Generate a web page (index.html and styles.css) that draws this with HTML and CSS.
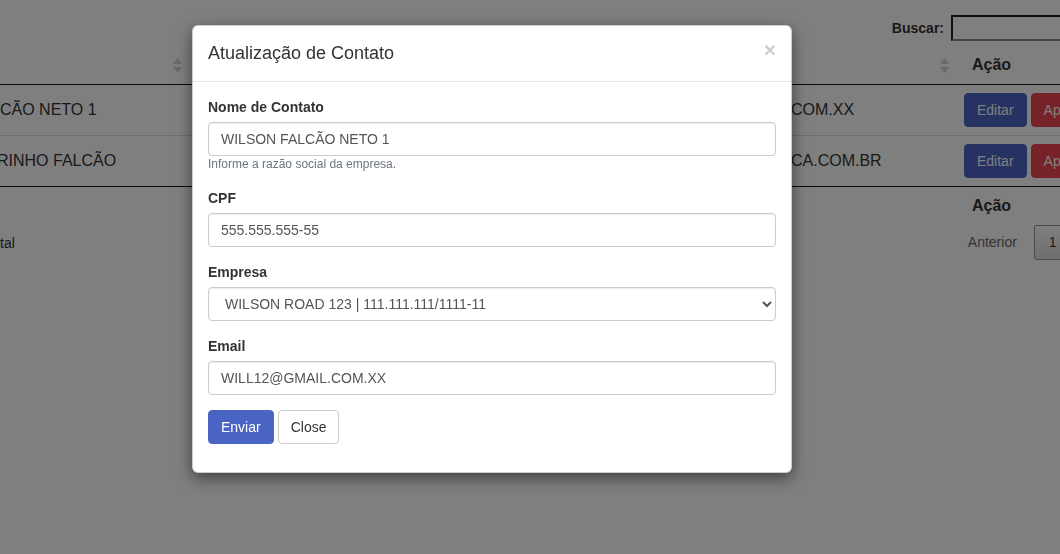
FILE: index.html
```html
<!DOCTYPE html>
<html lang="pt-BR">
<head>
<meta charset="utf-8">
<title>Contatos</title>
<link rel="stylesheet" href="styles.css">
</head>
<body>
<div class="page">
  <div class="filter">
    <label class="filter-label">Buscar:<input class="filter-input" type="search"></label>
  </div>
  <table class="data">
    <colgroup>
      <col class="c1"><col class="c2"><col class="c3"><col class="c4">
    </colgroup>
    <thead>
      <tr>
        <th class="sorting"><div class="th-in"><span></span><svg class="sort-icon" width="9" height="15" viewBox="0 0 9 15"><polygon points="4.5,0 9,6 0,6" /><polygon points="0,9 9,9 4.5,15" /></svg></div></th>
        <th class="sorting"></th>
        <th class="sorting"><div class="th-in"><span></span><svg class="sort-icon" width="9" height="15" viewBox="0 0 9 15"><polygon points="4.5,0 9,6 0,6" /><polygon points="0,9 9,9 4.5,15" /></svg></div></th>
        <th class="act-head">Ação</th>
      </tr>
    </thead>
    <tbody>
      <tr>
        <td class="first">CÃO NETO 1</td>
        <td></td>
        <td>COM.XX</td>
        <td class="actions"><button class="btn btn-blue">Editar</button><button class="btn btn-red">Apagar</button></td>
      </tr>
      <tr>
        <td class="first shifted">RINHO FALCÃO</td>
        <td></td>
        <td>CA.COM.BR</td>
        <td class="actions"><button class="btn btn-blue">Editar</button><button class="btn btn-red">Apagar</button></td>
      </tr>
    </tbody>
    <tfoot>
      <tr>
        <th></th>
        <th></th>
        <th></th>
        <th class="act-head">Ação</th>
      </tr>
    </tfoot>
  </table>
  <div class="bottom">
    <div class="info">tal</div>
    <div class="paging">
      <a class="pbtn disabled">Anterior</a>
      <a class="pbtn current">1</a>
      <a class="pbtn disabled">Próximo</a>
    </div>
  </div>
</div>

<div class="backdrop"></div>

<div class="modal">
  <div class="modal-header">
    <h4 class="modal-title">Atualização de Contato</h4>
    <button class="close" type="button">×</button>
  </div>
  <div class="modal-body">
    <div class="form-group">
      <label class="lbl">Nome de Contato</label>
      <input class="form-control" type="text" value="WILSON FALCÃO NETO 1">
      <small class="help">Informe a razão social da empresa.</small>
    </div>
    <div class="form-group">
      <label class="lbl">CPF</label>
      <input class="form-control" type="text" value="555.555.555-55">
    </div>
    <div class="form-group">
      <label class="lbl">Empresa</label>
      <select class="form-control">
        <option>WILSON ROAD 123 | 111.111.111/1111-11</option>
      </select>
    </div>
    <div class="form-group">
      <label class="lbl">Email</label>
      <input class="form-control" type="text" value="WILL12@GMAIL.COM.XX">
    </div>
    <div class="buttons">
      <button class="btn btn-blue" type="button">Enviar</button>
      <button class="btn btn-default" type="button">Close</button>
    </div>
  </div>
</div>
</body>
</html>
```
FILE: styles.css
```css
* { box-sizing: border-box; }

html, body {
  margin: 0;
  padding: 0;
  overflow: hidden;
  width: 1060px;
  height: 554px;
}

body {
  font-family: "Liberation Sans", Arial, sans-serif;
  font-size: 14px;
  color: #333;
  background: #fff;
}

.page {
  width: 1155px;
  padding-top: 15px;
}

/* search */
.filter {
  display: flex;
  justify-content: flex-end;
  align-items: center;
  height: 26px;
  margin-bottom: 5px;
}
.filter-label {
  display: flex;
  align-items: center;
  font-weight: bold;
  font-size: 14px;
  color: #333;
}
.filter-input {
  margin-left: 7px;
  width: 204px;
  height: 26px;
  border-style: solid;
  border-width: 2px;
  border-color: #222 #888 #888 #222;
  background: #fff;
  font: 14px "Liberation Sans", Arial, sans-serif;
}

/* table */
.data {
  width: 1155px;
  table-layout: fixed;
  border-collapse: separate;
  border-spacing: 0;
  font-size: 16px;
  color: #333;
}
.c1 { width: 187px; }
.c2 { width: 594px; }
.c3 { width: 173px; }
.c4 { width: 201px; }

.data thead th {
  padding: 10px 5px 10px 18px;
  line-height: 18px;
  height: 38px;
  border-bottom: 1px solid #111;
  font-weight: bold;
  text-align: left;
}
.data thead th.act-head { padding-left: 18px; }
.th-in {
  display: flex;
  justify-content: space-between;
  align-items: center;
}
.sort-icon { fill: #d2d2d2; display: block; }

.data tbody td {
  box-sizing: content-box;
  padding: 8px 10px;
  height: 34px;
  line-height: 20px;
  vertical-align: middle;
  white-space: nowrap;
  overflow: hidden;
}
.data tbody tr + tr td { border-top: 1px solid #ddd; }
.data tbody td.first { padding-left: 0; }
.data tbody td.shifted { text-indent: -3px; }
.data tbody td.actions { overflow: visible; }
.actions { display: flex; }
.actions .btn + .btn { margin-left: 4px; }

.data tfoot th {
  padding: 10px 18px 6px 18px;
  line-height: 18px;
  border-top: 1px solid #111;
  text-align: left;
  font-weight: bold;
}

/* info + paging */
.bottom {
  display: flex;
  justify-content: space-between;
  align-items: flex-start;
}
.info {
  padding-top: 11.5px;
  line-height: 20px;
  font-size: 14px;
  color: #333;
}
.paging {
  padding-top: 3.5px;
  display: flex;
}
.pbtn {
  display: block;
  padding: 7px 14px;
  line-height: 19px;
  margin-left: 2px;
  border: 1px solid transparent;
  border-radius: 2px;
  font-size: 14px;
  color: #333;
}
.pbtn.disabled { color: #666; }
.pbtn.current {
  border-color: #979797;
  background: linear-gradient(to bottom, #fff 0%, #dcdcdc 100%);
}

/* buttons */
.btn {
  display: inline-block;
  padding: 6px 12px;
  font: 14px/20px "Liberation Sans", Arial, sans-serif;
  border: 1px solid transparent;
  border-radius: 4px;
  cursor: pointer;
  white-space: nowrap;
}
.btn-blue { background: #4a64c4; border-color: #4a64c4; color: #fff; }
.btn-red { background: #ef4450; border-color: #ef4450; color: #fff; }
.btn-default { background: #fff; border-color: #ccc; color: #333; }

/* backdrop */
.backdrop {
  position: fixed;
  inset: 0;
  background: #000;
  opacity: 0.5;
}

/* modal */
.modal {
  position: absolute;
  top: 25px;
  left: 192px;
  width: 600px;
  background: #fff;
  border: 1px solid rgba(0, 0, 0, 0.2);
  border-radius: 6px;
  box-shadow: 0 5px 15px rgba(0, 0, 0, 0.5);
}
.modal-header {
  display: flex;
  justify-content: space-between;
  align-items: flex-start;
  padding: 15px;
  border-bottom: 1px solid #e5e5e5;
}
.modal-title {
  margin: 0;
  font-size: 18px;
  line-height: 25px;
  font-weight: normal;
  color: #333;
}
.close {
  margin-top: -2px;
  padding: 0;
  background: transparent;
  border: 0;
  font: bold 21px/1 "Liberation Sans", Arial, sans-serif;
  color: #000;
  text-shadow: 0 1px 0 #fff;
  opacity: 0.2;
  cursor: pointer;
}
.modal-body {
  padding: 15px 15px 28px;
}
.form-group { margin-bottom: 15px; }
.lbl {
  display: block;
  margin-bottom: 5px;
  font-weight: bold;
  font-size: 14px;
  line-height: 20px;
  color: #333;
}
.form-control {
  display: block;
  width: 100%;
  height: 34px;
  padding: 6px 12px;
  font: 14px/20px "Liberation Sans", Arial, sans-serif;
  color: #555;
  background: #fff;
  border: 1px solid #ccc;
  border-radius: 4px;
  box-shadow: inset 0 1px 1px rgba(0, 0, 0, 0.075);
}
.help {
  display: block;
  font-size: 12px;
  line-height: 14px;
  padding: 1px 0 2px;
  color: #6c757d;
}
.buttons {
  display: flex;
  gap: 4px;
}
```
